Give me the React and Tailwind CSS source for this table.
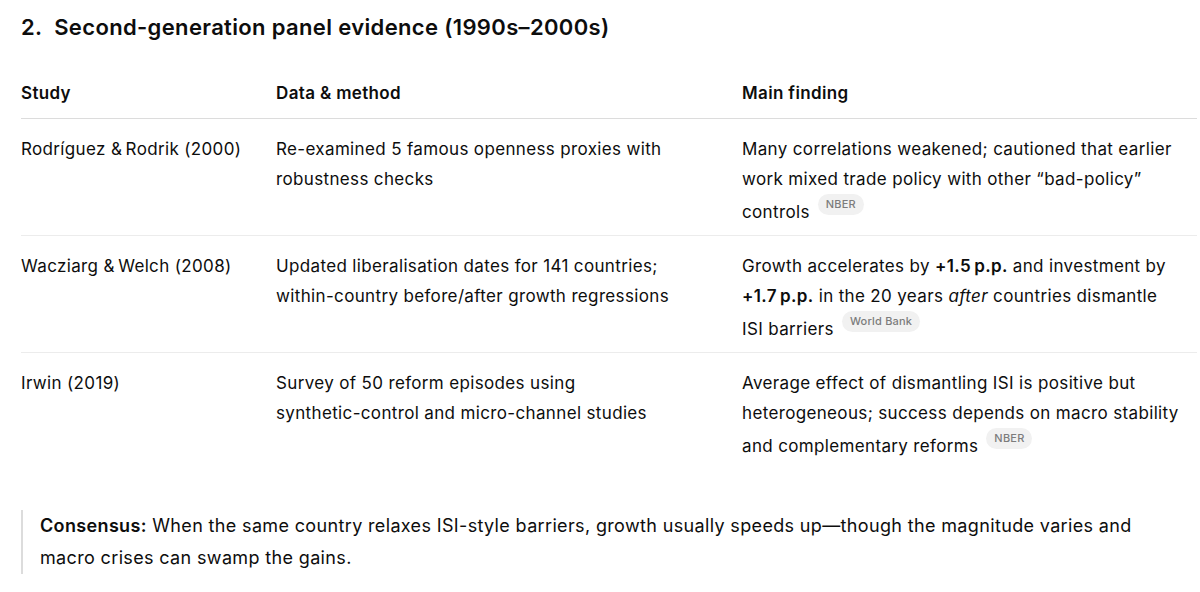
import React from "react";

const rows = [
  {
    study: "Rodríguez &\u202FRodrik (2000)",
    method: <>Re-examined 5 famous openness proxies with robustness checks</>,
    finding: (
      <>
        Many correlations weakened; cautioned that earlier work mixed trade
        policy with other “bad-policy” controls
      </>
    ),
    source: "NBER",
  },
  {
    study: "Wacziarg &\u202FWelch (2008)",
    method: (
      <>
        Updated liberalisation dates for 141 countries;{" "}
        <span className="whitespace-nowrap">within-country</span> before/after
        growth regressions
      </>
    ),
    finding: (
      <>
        Growth accelerates by{" "}
        <strong className="font-semibold">+1.5{"\u202F"}p.p.</strong> and
        investment by{" "}
        <strong className="font-semibold">+1.7{"\u202F"}p.p.</strong> in the 20
        years <em>after</em> countries dismantle ISI barriers
      </>
    ),
    source: "World Bank",
  },
  {
    study: "Irwin (2019)",
    method: (
      <>
        Survey of 50 reform episodes using{" "}
        <span className="whitespace-nowrap">synthetic-control</span> and{" "}
        <span className="whitespace-nowrap">micro-channel</span> studies
      </>
    ),
    finding: (
      <>
        Average effect of dismantling ISI is positive but heterogeneous; success
        depends on macro stability and complementary reforms
      </>
    ),
    source: "NBER",
  },
];

function SourceBadge({ label }) {
  return (
    <span className="ml-[8px] inline-block rounded-full bg-[#f1f1f1] px-2 text-[11px] font-medium leading-[21px] tracking-[0.2px] text-[#7c7c7c] align-[10px]">
      {label}
    </span>
  );
}

export default function App() {
  return (
    <div
      className="min-h-screen bg-white pl-[21px] pt-[12px] text-[#0d0d0d]"
      style={{ fontFamily: "Inter, 'Noto Sans', sans-serif" }}
    >
      <h3 className="text-[22px] font-semibold leading-[30px] tracking-[0.35px]">
        2.&nbsp; Second-generation panel evidence (1990s–2000s)
      </h3>

      <table className="mt-[36px] w-[1176px] table-fixed border-collapse text-left text-[17px] leading-[30px] tracking-[0.35px]">
        <colgroup>
          <col className="w-[255px]" />
          <col className="w-[466px]" />
          <col />
        </colgroup>
        <thead>
          <tr className="border-b border-[#dcdcdc]">
            <th className="pb-[10px] pr-4 font-semibold">Study</th>
            <th className="pb-[10px] pr-[28px] font-semibold">Data &amp; method</th>
            <th className="pb-[10px] pr-4 font-semibold">Main finding</th>
          </tr>
        </thead>
        <tbody>
          {rows.map((row, i) => (
            <tr
              key={row.study}
              className={i < rows.length - 1 ? "border-b border-[#ececec]" : ""}
            >
              <td className="pr-4 pt-[15px] pb-[8px] align-top">{row.study}</td>
              <td className="pr-[28px] pt-[15px] pb-[8px] align-top">{row.method}</td>
              <td className="pr-4 pt-[15px] pb-[8px] align-top">
                {row.finding}
                <SourceBadge label={row.source} />
              </td>
            </tr>
          ))}
        </tbody>
      </table>

      <blockquote className="mt-[41px] w-[1176px] border-l-2 border-[#dcdcdc] pl-[17px] pr-4 text-[18px] leading-[32px] tracking-[0.35px]">
        <strong className="font-semibold">Consensus:</strong> When the same
        country relaxes ISI-style barriers, growth usually speeds up—though the
        magnitude varies and macro crises can swamp the gains.
      </blockquote>
    </div>
  );
}
